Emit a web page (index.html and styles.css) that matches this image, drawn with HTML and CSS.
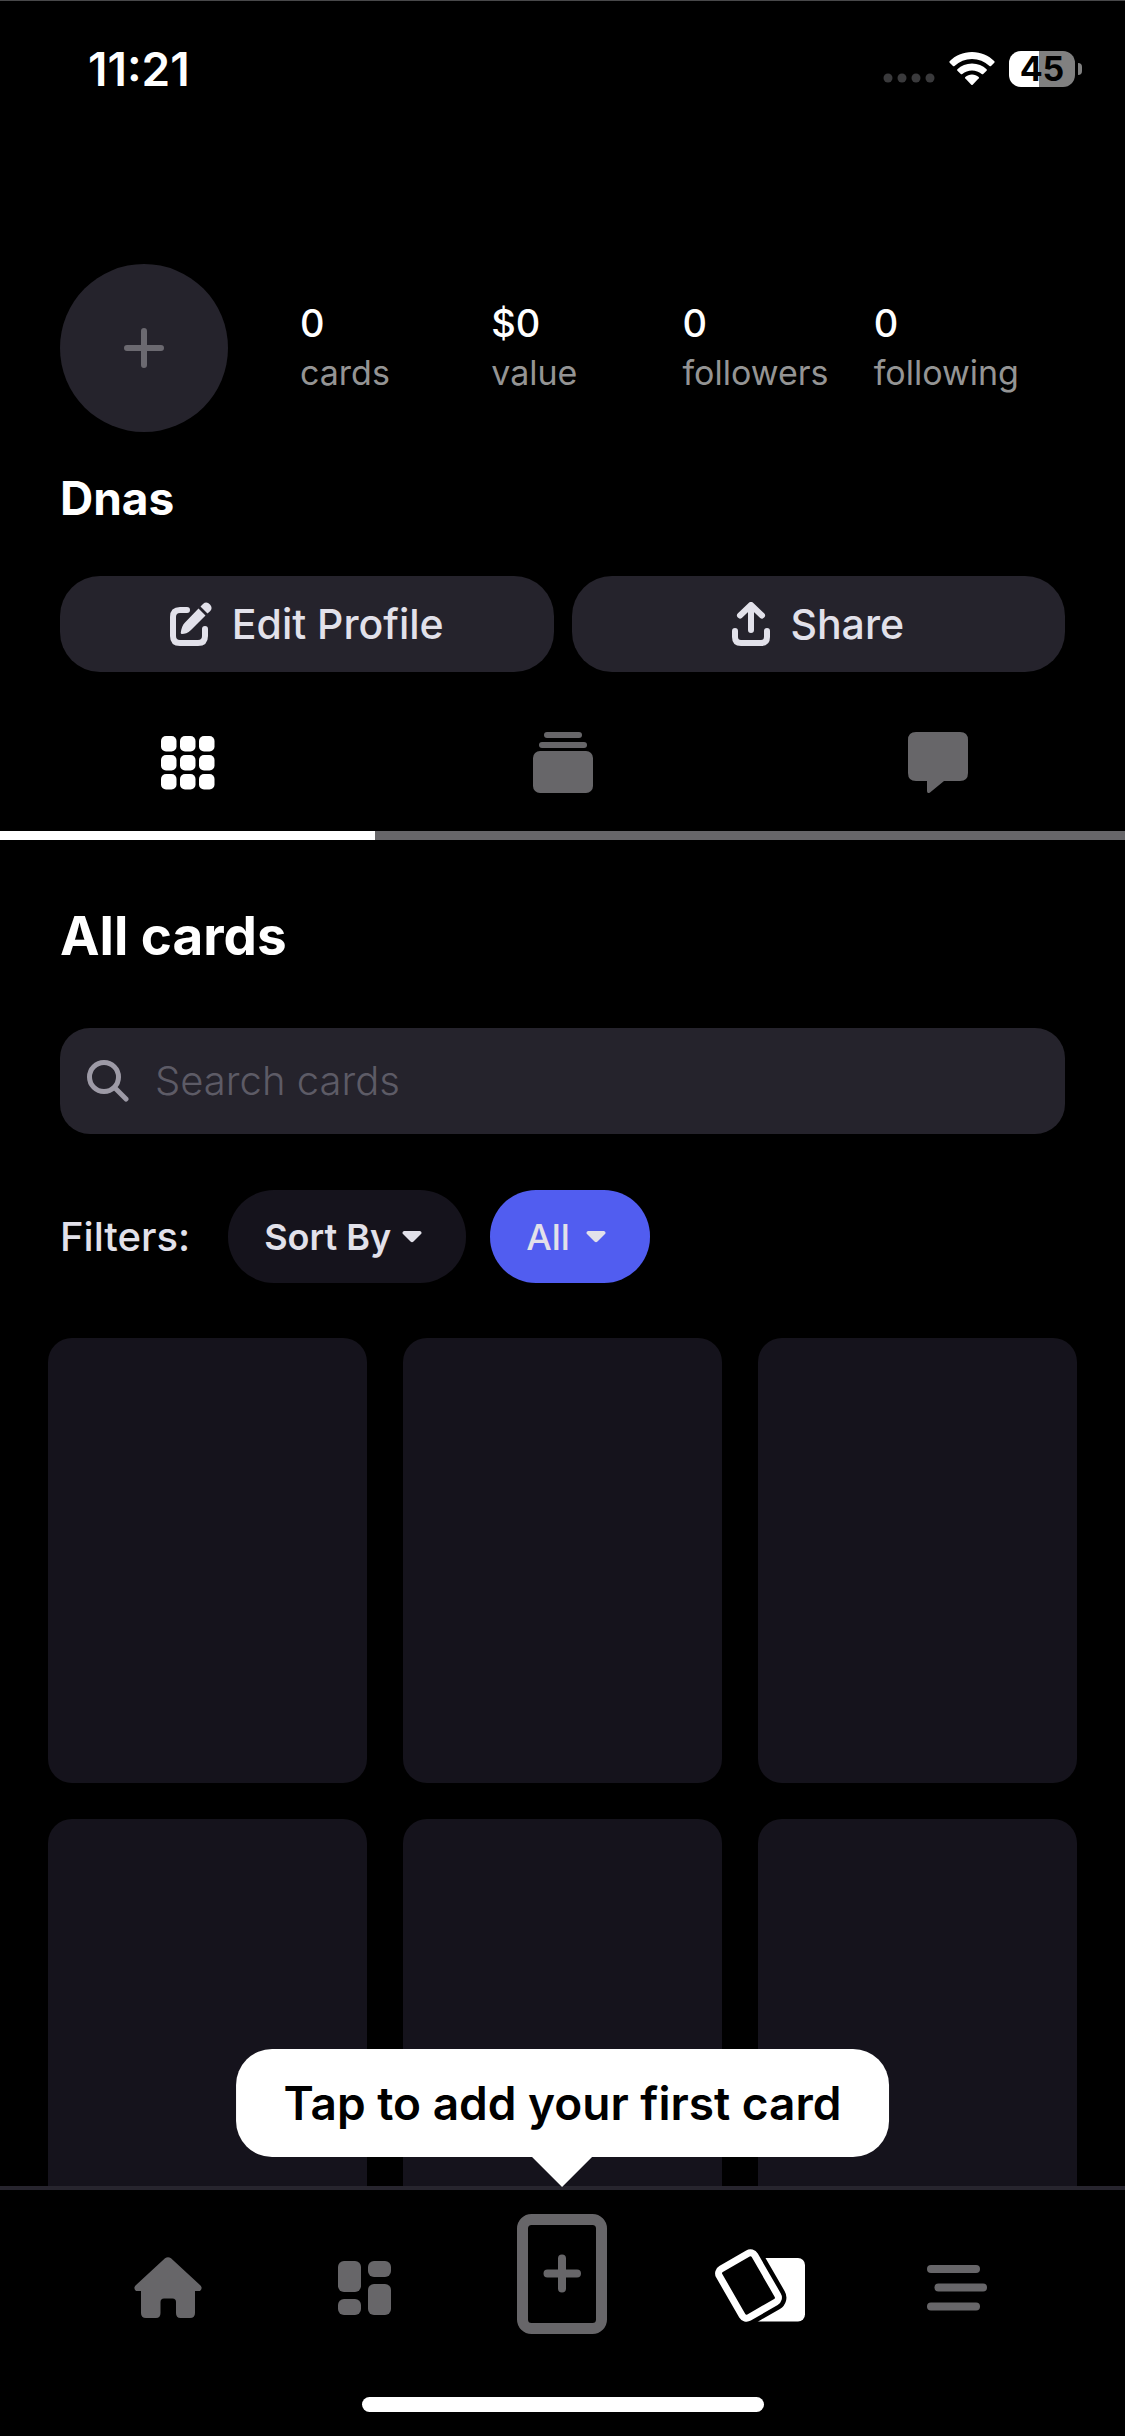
FILE: index.html
```html
<!DOCTYPE html>
<html lang="en">
<head>
<meta charset="utf-8">
<meta name="viewport" content="width=device-width, initial-scale=1">
<title>Dnas</title>
<link rel="stylesheet" href="styles.css">
</head>
<body>
<div class="app">
  <header class="status">
    <time class="clock">11:21</time>
    <div class="indicators">
      <svg class="signal" width="52" height="14" viewBox="0 0 52 14" aria-hidden="true"><circle cx="5" cy="5" r="4.5"/><circle cx="19" cy="5" r="4.5"/><circle cx="33" cy="5" r="4.5"/><circle cx="47" cy="5" r="4.5"/></svg>
      <svg class="wifi" width="46" height="34" viewBox="0 0 46 34" aria-hidden="true"><path d="M23 0C32 0 39.500 3.500 45.400 9.200Q46 10 45.300 10.700L42 14Q41.300 14.600 40.500 13.900C35.500 9.300 29.700 7 23 7S10.500 9.300 5.500 13.900Q4.700 14.600 4 14L.7 10.700Q0 10 .6 9.200C6.500 3.500 14 0 23 0Z"/><path d="M23 11.500C28.800 11.500 33.700 13.700 37.600 17.300Q38.300 18 37.600 18.700L34.200 22Q33.500 22.600 32.700 22C29.900 19.600 26.700 18.400 23 18.400S16.100 19.600 13.300 22Q12.500 22.600 11.800 22L8.400 18.700Q7.700 18 8.400 17.300C12.300 13.700 17.200 11.500 23 11.500Z"/><path d="M23 22.500C25.600 22.500 27.800 23.400 29.700 24.900Q30.400 25.600 29.800 26.300L23.700 32.700Q23 33.300 22.300 32.700L16.200 26.300Q15.600 25.600 16.300 24.900C18.200 23.400 20.400 22.500 23 22.500Z"/></svg>
      <div class="battery"><span class="level">45</span></div>
    </div>
  </header>

  <main class="content">
    <section class="profile">
      <div class="summary">
        <button class="avatar" type="button" aria-label="Add photo">
          <svg width="40" height="40" viewBox="0 0 40 40"><path d="M20 3V37M3 20H37"/></svg>
        </button>
        <dl class="stats">
          <div><dd>0</dd><dt>cards</dt></div>
          <div><dd>$0</dd><dt>value</dt></div>
          <div><dd>0</dd><dt>followers</dt></div>
          <div><dd>0</dd><dt>following</dt></div>
        </dl>
      </div>
      <h1 class="name">Dnas</h1>
      <div class="actions">
        <button class="action" type="button">
          <svg width="42" height="44" viewBox="0 0 42 44"><path class="line" d="M17 8H10Q3 8 3 15V34Q3 41 10 41H28Q35 41 35 34V27"/><path d="M28.500 6.500L35.500 13.500L21 28C18 31 14.500 32 12 32Q10.500 32 10.800 30.400C11.300 27 12.500 23 15 20.500ZM30.500 4.500L33 2Q36.500-1 40 2.500Q43 6 40.300 9L37.500 11.500Z"/></svg>
          <span>Edit Profile</span>
        </button>
        <button class="action" type="button">
          <svg width="38" height="44" viewBox="0 0 38 44"><path class="line" d="M19 28V4M8 13.500L19 3L30 13.500M3 29V35Q3 41 9 41H29Q35 41 35 35V29"/></svg>
          <span>Share</span>
        </button>
      </div>
    </section>

    <nav class="tabs" aria-label="Profile sections">
      <button class="tab active" type="button" aria-label="All cards">
        <svg width="60" height="62" viewBox="0 0 60 62"><g transform="translate(3 4)"><rect width="15.500" height="15.500" rx="5"/><rect x="19" width="15.500" height="15.500" rx="5"/><rect x="38" width="15.500" height="15.500" rx="5"/><rect y="19" width="15.500" height="15.500" rx="5"/><rect x="19" y="19" width="15.500" height="15.500" rx="5"/><rect x="38" y="19" width="15.500" height="15.500" rx="5"/><rect y="38" width="15.500" height="15.500" rx="5"/><rect x="19" y="38" width="15.500" height="15.500" rx="5"/><rect x="38" y="38" width="15.500" height="15.500" rx="5"/></g></svg>
      </button>
      <button class="tab" type="button" aria-label="Collections">
        <svg width="60" height="62" viewBox="0 0 60 62"><rect x="11" width="38" height="6" rx="3"/><rect x="6" y="10" width="48" height="6" rx="3"/><rect y="19" width="60" height="42" rx="7"/></svg>
      </button>
      <button class="tab" type="button" aria-label="Comments">
        <svg width="60" height="62" viewBox="0 0 60 62"><path d="M8 0H52Q60 0 60 8V41Q60 49 52 49H36L22 60.500Q19 62 19 59V49H8Q0 49 0 41V8Q0 0 8 0Z"/></svg>
      </button>
    </nav>

    <section class="collection">
      <h2 class="heading">All cards</h2>
      <label class="search">
        <svg width="42" height="42" viewBox="0 0 42 42"><circle cx="17" cy="17" r="14.500"/><path d="M28 28L39 39"/></svg>
        <input type="search" placeholder="Search cards" aria-label="Search cards">
      </label>
      <div class="filters">
        <span class="filters-label">Filters:</span>
        <label class="pill">
          <select class="pill-select sort" aria-label="Sort by"><option>Sort By</option></select>
          <svg width="20" height="12" viewBox="0 0 20 12"><path d="M2 0H18Q20.500 1 19 3L11.500 10.500Q10 12 8.500 10.500L1 3Q-.5 1 2 0Z"/></svg>
        </label>
        <label class="pill primary">
          <select class="pill-select" aria-label="Show"><option>All</option></select>
          <svg width="20" height="12" viewBox="0 0 20 12"><path d="M2 0H18Q20.500 1 19 3L11.500 10.500Q10 12 8.500 10.500L1 3Q-.5 1 2 0Z"/></svg>
        </label>
      </div>
    </section>

    <div class="cards">
      <div class="card"></div><div class="card"></div><div class="card"></div>
      <div class="card"></div><div class="card"></div><div class="card"></div>
    </div>
  </main>

  <footer class="dock">
    <div class="tooltip" role="tooltip">Tap to add your first card</div>
    <nav class="menu" aria-label="Main">
      <a href="#home" aria-label="Home"><svg width="68" height="62" viewBox="0 0 68 62"><path d="M31 1.200Q34-.8 37 1.200L66.500 28.500Q69 31.500 66 34H61V56Q61 61 56 61H46.500Q42 61 42 56V45Q42 41.500 38.500 41.500H30Q26.500 41.500 26.500 45V56Q26.500 61 22 61H12Q7 61 7 56V34H2Q-1 31.500 1.500 28.500Z"/></svg></a>
      <a href="#discover" aria-label="Discover"><svg width="54" height="54" viewBox="0 0 54 54"><rect width="23" height="31" rx="6"/><rect y="38" width="23" height="16" rx="6"/><rect x="30" width="23" height="16" rx="6"/><rect x="30" y="23" width="23" height="31" rx="6"/></svg></a>
      <a class="add" href="#add" aria-label="Add card"><svg width="90" height="120" viewBox="0 0 90 120"><rect class="frame" x="5.500" y="5.500" width="79" height="109" rx="9"/><path class="plus" d="M45 44.500V74.500M30.500 59.500H60"/></svg></a>
      <a class="current" href="#cards" aria-label="My cards"><svg width="90" height="78" viewBox="0 0 90 78"><rect x="37" y="9" width="53" height="63.500" rx="7"/><g transform="rotate(-30 33.500 36.500)"><rect class="gap" x="13" y="8.500" width="41" height="56" rx="5"/><rect class="tile" x="13" y="8.500" width="41" height="56" rx="5"/></g></svg></a>
      <a href="#menu" aria-label="Menu"><svg width="60" height="46" viewBox="0 0 60 46"><rect width="53" height="8" rx="4"/><rect x="7.500" y="18.500" width="52.500" height="8" rx="4"/><rect y="37.500" width="53" height="8" rx="4"/></svg></a>
    </nav>
    <div class="home-bar"></div>
  </footer>
</div>
</body>
</html>
```
FILE: styles.css
```css
* {
  box-sizing: border-box;
}

body {
  margin: 0;
  background: #000;
  color: #fff;
  font-family: Inter, "Liberation Sans", sans-serif;
}

button,
input,
select {
  border: 0;
  margin: 0;
  padding: 0;
  background: none;
  color: inherit;
  font: inherit;
}

h1,
h2,
dl,
dd {
  margin: 0;
}

svg {
  display: block;
  flex: none;
  fill: currentColor;
}

.app {
  display: flex;
  flex-direction: column;
  height: 100vh;
  border-top: 1px solid #48484a;
}

/* Status bar */
.status {
  display: flex;
  justify-content: space-between;
  align-items: center;
  padding: 43px 43px 0 88px;
}

.clock {
  font-size: 46px;
  line-height: 50px;
  font-weight: 600;
}

.indicators {
  display: flex;
  align-items: center;
  gap: 14px;
}

.signal {
  align-self: flex-end;
  color: #3a3a3c;
}

.battery {
  display: flex;
  align-items: center;
  gap: 3px;
}

.battery::after {
  content: "";
  width: 4px;
  height: 12px;
  border-radius: 0 4px 4px 0;
  background: #808080;
}

.level {
  width: 66px;
  border-radius: 12px;
  background: linear-gradient(90deg, #fff 30px, #808080 30px);
  color: #000;
  font-size: 34px;
  line-height: 36px;
  font-weight: 700;
  text-align: center;
}

/* Scrolling content */
.content {
  flex: 1;
  min-height: 0;
  padding-top: 170px;
  overflow: hidden;
}

.profile {
  padding: 0 60px;
}

.summary {
  display: flex;
  align-items: center;
  gap: 72px;
}

.avatar {
  display: grid;
  flex: none;
  place-items: center;
  width: 168px;
  height: 168px;
  border-radius: 50%;
  background: #25232c;
  color: #6b6970;
}

.avatar svg {
  stroke: currentColor;
  stroke-width: 6;
  stroke-linecap: round;
}

.stats {
  display: grid;
  flex: 1;
  grid-template-columns: repeat(4, 1fr);
}

.stats dd {
  font-size: 38px;
  line-height: 50px;
  font-weight: 500;
}

.stats dt {
  color: #949494;
  font-size: 34px;
  line-height: 50px;
}

.name {
  padding-top: 36px;
  font-size: 46px;
  line-height: 60px;
  font-weight: 700;
}

.actions {
  display: grid;
  grid-template-columns: 1fr 1fr;
  gap: 18px;
  padding-top: 48px;
}

.action {
  display: flex;
  align-items: center;
  justify-content: center;
  gap: 20px;
  height: 96px;
  border-radius: 40px;
  background: #25232c;
  color: #e2e1ea;
  font-size: 41px;
  font-weight: 500;
}

.action .line {
  fill: none;
  stroke: currentColor;
  stroke-width: 6;
  stroke-linecap: round;
  stroke-linejoin: round;
}

.tabs {
  display: grid;
  grid-template-columns: repeat(3, 1fr);
  padding-top: 22px;
}

.tab {
  display: grid;
  place-items: center;
  height: 146px;
  border-bottom: 9px solid #676669;
  color: #676669;
}

.tab.active {
  border-color: #fff;
  color: #fff;
}

.collection {
  padding: 60px 60px 55px;
}

.heading {
  font-size: 53px;
  line-height: 72px;
  font-weight: 700;
}

.search {
  display: flex;
  align-items: center;
  gap: 26px;
  height: 106px;
  margin-top: 56px;
  padding: 0 27px;
  border-radius: 30px;
  background: #25232c;
}

.search svg {
  fill: none;
  stroke: #9d9aa6;
  stroke-width: 5;
  stroke-linecap: round;
}

.search input {
  flex: 1;
  min-width: 0;
  outline: 0;
  appearance: none;
  font-size: 40px;
  line-height: 48px;
  font-weight: 300;
}

.search input::placeholder {
  color: #5d5b66;
}

.filters {
  display: flex;
  align-items: center;
  gap: 24px;
  padding-top: 56px;
  color: #e2e1ea;
}

.filters-label {
  margin-right: 14px;
  font-size: 40px;
  font-weight: 500;
}

.pill {
  display: grid;
  grid-template-columns: 1fr 64px;
  align-items: center;
  border-radius: 46px;
  background: #15131c;
}

.pill.primary {
  background: #515df0;
}

.pill-select {
  grid-area: 1 / 1 / 2 / 3;
  width: 160px;
  height: 93px;
  padding: 0 64px 0 36px;
  outline: 0;
  appearance: none;
  font-size: 36px;
  font-weight: 500;
}

.pill-select.sort {
  width: 238px;
  font-weight: 600;
}

.pill svg {
  grid-area: 1 / 2;
  pointer-events: none;
}

.cards {
  display: grid;
  grid-template-columns: repeat(3, 1fr);
  gap: 36px;
  padding: 0 48px;
}

.card {
  aspect-ratio: 319 / 445;
  border-radius: 24px;
  background: #15131c;
}

/* Bottom navigation */
.dock {
  position: relative;
  border-top: 4px solid #27252e;
  padding-bottom: 24px;
}

.tooltip {
  position: absolute;
  bottom: calc(100% + 33px);
  left: 50%;
  transform: translateX(-50%);
  padding: 24px 48px;
  border-radius: 36px;
  background: #fff;
  color: #000;
  font-size: 46px;
  line-height: 60px;
  font-weight: 600;
  white-space: nowrap;
}

.tooltip::after {
  content: "";
  position: absolute;
  top: 100%;
  left: 50%;
  border: 30px solid transparent;
  border-top-color: #fff;
  border-bottom: 0;
  transform: translateX(-50%);
}

.menu {
  display: grid;
  grid-template-columns: repeat(5, 1fr);
  align-items: center;
  justify-items: center;
  height: 207px;
  padding: 0 69px 12px;
}

.menu a {
  color: #676669;
}

.menu .current {
  color: #fff;
}

.menu .add {
  padding-bottom: 28px;
}

.frame,
.plus {
  fill: none;
  stroke: currentColor;
  stroke-width: 11;
}

.plus {
  stroke-width: 8;
  stroke-linecap: round;
}

.gap {
  stroke: #000;
  stroke-width: 16;
}

.tile {
  fill: #000;
  stroke: currentColor;
  stroke-width: 7;
}

.home-bar {
  width: 402px;
  height: 15px;
  margin: 0 auto;
  border-radius: 8px;
  background: #fff;
}
```
